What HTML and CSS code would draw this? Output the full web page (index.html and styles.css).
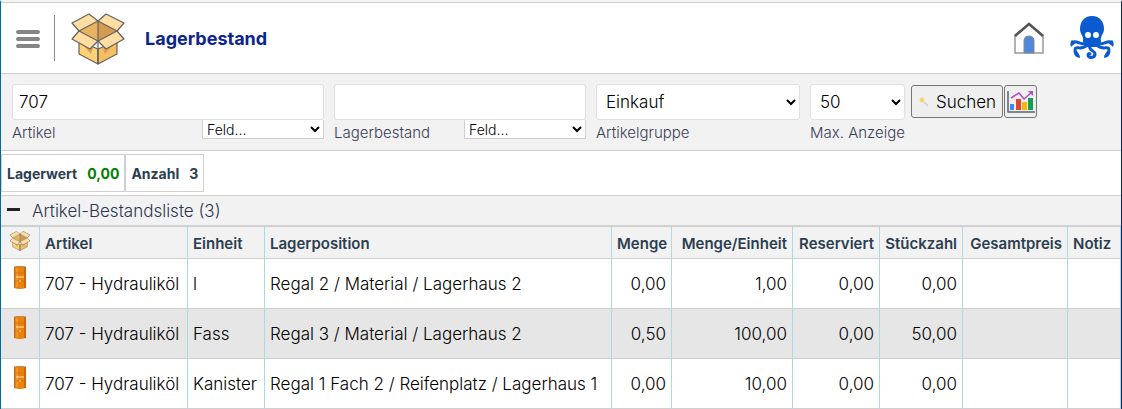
FILE: index.html
```html
<!DOCTYPE html>
<html lang="de">
<head>
    <meta charset="UTF-8">
    <meta name="viewport" content="width=device-width, initial-scale=1">
    <title>Lagerbestand</title>
    <link rel="stylesheet" href="styles.css">
</head>
<body>

<!-- Symbole -->
<svg class="symbole" aria-hidden="true">
    <symbol id="karton" viewBox="0 0 54 52">
        <g stroke="#65625c" stroke-width="1.2" stroke-linejoin="round">
            <path fill="#ffd27a" d="M8 28 L27 36 V51 L8 41 Z"/>
            <path fill="#f6bd62" d="M46 28 L27 36 V51 L46 41 Z"/>
        </g>
        <path fill="#dda04c" d="M12 32 L20 41 L22 35 Z M42 32 L34 41 L32 35 Z"/>
        <path fill="#e9b35f" d="M8 18 L27 8 V28 Z"/>
        <path fill="#d39b50" d="M46 18 L27 8 V28 Z"/>
        <g fill="#ffdda3" stroke="#65625c" stroke-width="1.2" stroke-linejoin="round">
            <path d="M1 10 L18 1 L27 8 L8 18 Z"/>
            <path d="M53 10 L35 1 L27 8 L46 18 Z"/>
            <path d="M8 18 L27 28 L19 36 L1 26 Z"/>
            <path d="M46 18 L27 28 L35 36 L53 26 Z"/>
            <path d="M27 8 V51"/>
        </g>
    </symbol>
    <symbol id="fass" viewBox="0 0 12 23">
        <path fill="#ea820c" d="M0 1 Q6 -1 12 1 V22 Q6 24 0 22 Z"/>
        <path fill="#c9680a" d="M0 1 H1 V22 H0 Z M10 1 H12 V22 H10 Z"/>
        <path fill="none" stroke="#f7a84a" d="M3 2 V21"/>
        <path fill="none" stroke="#c9680a" d="M0 7 H12 M0 15 H12" stroke-width="0.6"/>
        <path fill="none" stroke="#fde6c8" d="M2 11 H10 M5 15 H7"/>
        <path fill="none" stroke="#a8896b" d="M0 1 Q6 -1 12 1" stroke-width="0.8"/>
    </symbol>
</svg>

<div class="seite">
    <header class="kopf">
        <button type="button" class="menue" aria-label="Menü"><span></span><span></span><span></span></button>
        <div class="marke">
            <svg class="logo" aria-hidden="true"><use href="#karton"/></svg>
        </div>
        <h1>Lagerbestand</h1>
        <a href="#" class="start" aria-label="Startseite">
            <svg width="32" height="34" viewBox="0 0 32 34">
                <path d="M2 14 L16 3 L30 14 V32 H2 Z" fill="#fff" stroke="#999" stroke-width="1.5"/>
                <path d="M11 32 V20 Q11 15 16 15 Q21 15 21 20 V32 Z" fill="#4d88dc" stroke="#888"/>
                <path d="M2 15 L16 3 L30 15" fill="none" stroke="#555" stroke-width="2.5"/>
            </svg>
        </a>
        <a href="#" class="krake" aria-label="Hilfe">
            <svg width="44" height="44" viewBox="0 0 44 44">
                <path fill="#0a5bd0" d="M22 0 C14 0 10 6 10 13 C10 18 14 20 13 25 L15 31 H29 L31 25 C30 20 34 18 34 13 C34 6 30 0 22 0 Z"/>
                <g fill="none" stroke="#0a5bd0" stroke-width="3" stroke-linecap="round">
                    <path d="M15 27 C11 30 7 24 3 26"/>
                    <path d="M29 27 C33 30 37 24 41 26"/>
                    <path d="M17 29 C12 35 5 29 5 34 C5 37 6 39 8 40"/>
                    <path d="M27 29 C32 35 39 29 39 34 C39 37 38 39 36 40"/>
                </g>
                <g fill="#0a5bd0">
                    <path d="M2 24 C0 26 0 28 1 31 C3 29 4 28 6 27 Z"/>
                    <path d="M42 24 C44 26 44 28 43 31 C41 29 40 28 38 27 Z"/>
                    <path d="M4 35 C4 39 7 41 10 42 C10 39 8 37 7 35 Z"/>
                    <path d="M40 35 C40 39 37 41 34 42 C34 39 36 37 37 35 Z"/>
                </g>
                <path d="M20 29 C18 35 25 34 25 38 C25 42 18 43 18 39 C18 38 19 37 20 38" fill="none" stroke="#0a5bd0" stroke-width="3" stroke-linecap="round"/>
                <circle cx="18" cy="19" r="3" fill="#fff"/>
                <circle cx="26" cy="19" r="3" fill="#fff"/>
            </svg>
        </a>
    </header>

    <form class="filter">
        <div class="feld feld-artikel">
            <input type="text" id="artikel" value="707">
            <div class="zeile">
                <label for="artikel">Artikel</label>
                <select class="klein" aria-label="Feld Artikel"><option>Feld...</option></select>
            </div>
        </div>
        <div class="feld feld-bestand">
            <input type="text" id="bestand">
            <div class="zeile">
                <label for="bestand">Lagerbestand</label>
                <select class="klein" aria-label="Feld Lagerbestand"><option>Feld...</option></select>
            </div>
        </div>
        <div class="feld feld-gruppe">
            <select id="gruppe"><option>Einkauf</option></select>
            <div class="zeile"><label for="gruppe">Artikelgruppe</label></div>
        </div>
        <div class="feld feld-max">
            <select id="max"><option>50</option></select>
            <div class="zeile"><label for="max">Max. Anzeige</label></div>
        </div>
        <div class="knoepfe">
            <button type="button" class="suchen">
                <svg width="12" height="12" viewBox="0 0 12 12" aria-hidden="true">
                    <path d="M6 6 L10 10" stroke="#c9cdd0" stroke-width="1.5"/>
                    <circle cx="4" cy="4" r="2" fill="#ffd04f" stroke="#f0d68e"/>
                </svg>
                Suchen
            </button>
            <button type="button" class="statistik" aria-label="Statistik">
                <svg width="28" height="22" viewBox="0 0 28 22">
                    <path d="M1 0 V21 H28" fill="none" stroke="#56666d" stroke-width="1.5"/>
                    <path d="M3 13 H7 V19 H3 Z" fill="#4285f4"/>
                    <path d="M9 8 H14 V19 H9 Z" fill="#e04436"/>
                    <path d="M15 11 H20 V19 H15 Z" fill="#fbb606"/>
                    <path d="M21 7 H26 V19 H21 Z" fill="#149e58"/>
                    <path d="M4 7 L12 2 L17 8 L25 1" fill="none" stroke="#b04cc4" stroke-width="1.5"/>
                    <path d="M21 0 H26 V5 Z" fill="#b04cc4"/>
                </svg>
            </button>
        </div>
    </form>

    <div class="summen">
        <div class="summe">Lagerwert <span class="wert">0,00</span></div>
        <div class="summe">Anzahl <span>3</span></div>
    </div>

    <button type="button" class="abschnitt"><span class="minus"></span>Artikel-Bestandsliste (3)</button>

    <table class="liste">
        <colgroup>
            <col class="c-bild"><col class="c-artikel"><col class="c-einheit"><col>
            <col class="c-menge"><col class="c-pro"><col class="c-res"><col class="c-stueck">
            <col class="c-preis"><col class="c-notiz">
        </colgroup>
        <thead>
            <tr>
                <th class="bild"><svg class="karton-klein" role="img" aria-label="Bild"><use href="#karton"/></svg></th>
                <th>Artikel</th>
                <th>Einheit</th>
                <th>Lagerposition</th>
                <th class="zahl">Menge</th>
                <th class="zahl">Menge/Einheit</th>
                <th class="zahl">Reserviert</th>
                <th class="zahl">Stückzahl</th>
                <th class="zahl">Gesamtpreis</th>
                <th>Notiz</th>
            </tr>
        </thead>
        <tbody>
            <tr>
                <td class="bild"><svg class="fass"><use href="#fass"/></svg></td>
                <td>707 - Hydrauliköl</td>
                <td>l</td>
                <td>Regal 2 / Material / Lagerhaus 2</td>
                <td class="zahl">0,00</td>
                <td class="zahl">1,00</td>
                <td class="zahl">0,00</td>
                <td class="zahl">0,00</td>
                <td></td>
                <td></td>
            </tr>
            <tr>
                <td class="bild"><svg class="fass"><use href="#fass"/></svg></td>
                <td>707 - Hydrauliköl</td>
                <td>Fass</td>
                <td>Regal 3 / Material / Lagerhaus 2</td>
                <td class="zahl">0,50</td>
                <td class="zahl">100,00</td>
                <td class="zahl">0,00</td>
                <td class="zahl">50,00</td>
                <td></td>
                <td></td>
            </tr>
            <tr>
                <td class="bild"><svg class="fass"><use href="#fass"/></svg></td>
                <td>707 - Hydrauliköl</td>
                <td>Kanister</td>
                <td>Regal 1 Fach 2 / Reifenplatz / Lagerhaus 1</td>
                <td class="zahl">0,00</td>
                <td class="zahl">10,00</td>
                <td class="zahl">0,00</td>
                <td class="zahl">0,00</td>
                <td></td>
                <td></td>
            </tr>
        </tbody>
    </table>
</div>

</body>
</html>
```
FILE: styles.css
```css
* {
    box-sizing: border-box;
}
body {
    margin: 0;
    font-family: Inter, "Liberation Sans", sans-serif;
    font-size: 17px;
    font-weight: 300;
    color: #000;
    background: #fff;
}
input, select, button {
    font-family: inherit;
    font-size: 17px;
    font-weight: 300;
    color: #000;
}
.symbole {
    display: none;
}
.seite {
    min-height: 100vh;
    border-left: 1px solid #006a9e;
    border-right: 1px solid #10265e;
    border-top: 2px solid #f3f3f3;
}

/* Kopfzeile */
.kopf {
    display: flex;
    align-items: center;
    height: 72px;
    padding: 0 7px 0 15px;
    border-top: 1px solid #d0d0d0;
    border-bottom: 1px solid #d0d0d0;
}
.menue {
    display: flex;
    flex-direction: column;
    gap: 3px;
    width: 24px;
    padding: 2px 0 0;
    border: none;
    background: none;
}
.menue span {
    height: 4px;
    border-radius: 2px;
    background: #858585;
}
.marke {
    display: flex;
    align-items: center;
    height: 46px;
    margin-left: 14px;
    padding-left: 16px;
    border-left: 1px solid #888;
}
.logo {
    flex: none;
    width: 54px;
    height: 52px;
    margin-top: 2px;
}
.kopf h1 {
    margin: 0 auto 0 20px;
    font-size: 18px;
    font-weight: 700;
    color: #0a2490;
}
.start, .krake {
    display: flex;
}
.krake {
    margin-left: 25px;
}

/* Filter */
.filter {
    display: flex;
    gap: 10px;
    height: 77px;
    padding: 10px 11px 0;
    background: #f2f2f2;
    border-bottom: 1px solid #d0d0d0;
}
.feld-artikel {
    width: 312px;
}
.feld-bestand {
    width: 252px;
}
.feld-gruppe {
    width: 204px;
}
.feld-max {
    width: 95px;
}
.feld > input,
.feld > select {
    display: block;
    width: 100%;
    height: 36px;
    padding: 0 6px;
    border: 1px solid #e0e0e0;
    border-radius: 3px;
    background-color: #fff;
}
.feld > select {
    padding: 0 5px;
}
.zeile {
    display: flex;
    justify-content: space-between;
    align-items: flex-start;
}
.zeile label {
    padding-top: 4px;
    font-size: 15px;
    line-height: 17px;
    color: #3a4058;
    white-space: nowrap;
}
.klein {
    width: 122px;
    height: 19px;
    padding: 0;
    border: 1px solid #d0d0d0;
    border-top: none;
    font-size: 14px;
    background-color: #fff;
}
.knoepfe {
    display: flex;
    gap: 1px;
    margin: 1px 0 0 -4px;
}
.knoepfe button {
    display: flex;
    align-items: center;
    justify-content: center;
    height: 33px;
    padding: 0;
    border: 1px solid #767676;
    border-radius: 3px;
    background: #efefef;
}
.knoepfe .suchen {
    width: 92px;
    gap: 6px;
}
.knoepfe .statistik {
    width: 33px;
}

/* Summen */
.summen {
    display: flex;
    height: 45px;
    padding-top: 3px;
    border-bottom: 1px solid #d0d0d0;
}
.summe {
    display: flex;
    align-items: center;
    gap: 10px;
    height: 38px;
    padding: 0 5px;
    border: 1px solid #d0d0d0;
    font-size: 14px;
    font-weight: 700;
    color: #2c3e50;
}
.summe .wert {
    color: #008000;
}

/* Bestandsliste */
.abschnitt {
    display: flex;
    align-items: center;
    gap: 12px;
    width: 100%;
    height: 29px;
    padding: 0 6px;
    border: none;
    background: #f2f2f2;
    color: #2c3650;
}
.minus {
    width: 13px;
    height: 3px;
    margin-bottom: 3px;
    background: #222;
}
.liste {
    width: 100%;
    table-layout: fixed;
    border-collapse: separate;
    border-spacing: 0;
    border-top: 2px solid #d0d0d0;
}
.c-bild {
    width: 39px;
}
.c-artikel {
    width: 148px;
}
.c-einheit {
    width: 77px;
}
.c-menge {
    width: 60px;
}
.c-pro {
    width: 121px;
}
.c-res {
    width: 87px;
}
.c-stueck {
    width: 83px;
}
.c-preis {
    width: 105px;
}
.c-notiz {
    width: 53px;
}
.liste th,
.liste td {
    padding: 0 5px;
    border-right: 1px solid #add8e6;
    border-bottom: 1px solid #d0d0d0;
    text-align: left;
    white-space: nowrap;
}
.liste th {
    height: 32px;
    padding-top: 2px;
    background: #f2f2f2;
    font-size: 15px;
    font-weight: 600;
    color: #2c3e50;
}
.liste td {
    height: 50px;
}
.liste tbody tr:nth-child(even) {
    background: #e6e6e6;
}
.liste .zahl {
    text-align: right;
}
.liste .bild {
    padding-top: 0;
    text-align: center;
}
.liste th.bild {
    padding-bottom: 3px;
}
.liste td.bild {
    padding-bottom: 13px;
}
.karton-klein,
.fass {
    display: block;
    margin: 0 auto;
}
.karton-klein {
    width: 22px;
    height: 20px;
}
.fass {
    width: 12px;
    height: 23px;
}
```
